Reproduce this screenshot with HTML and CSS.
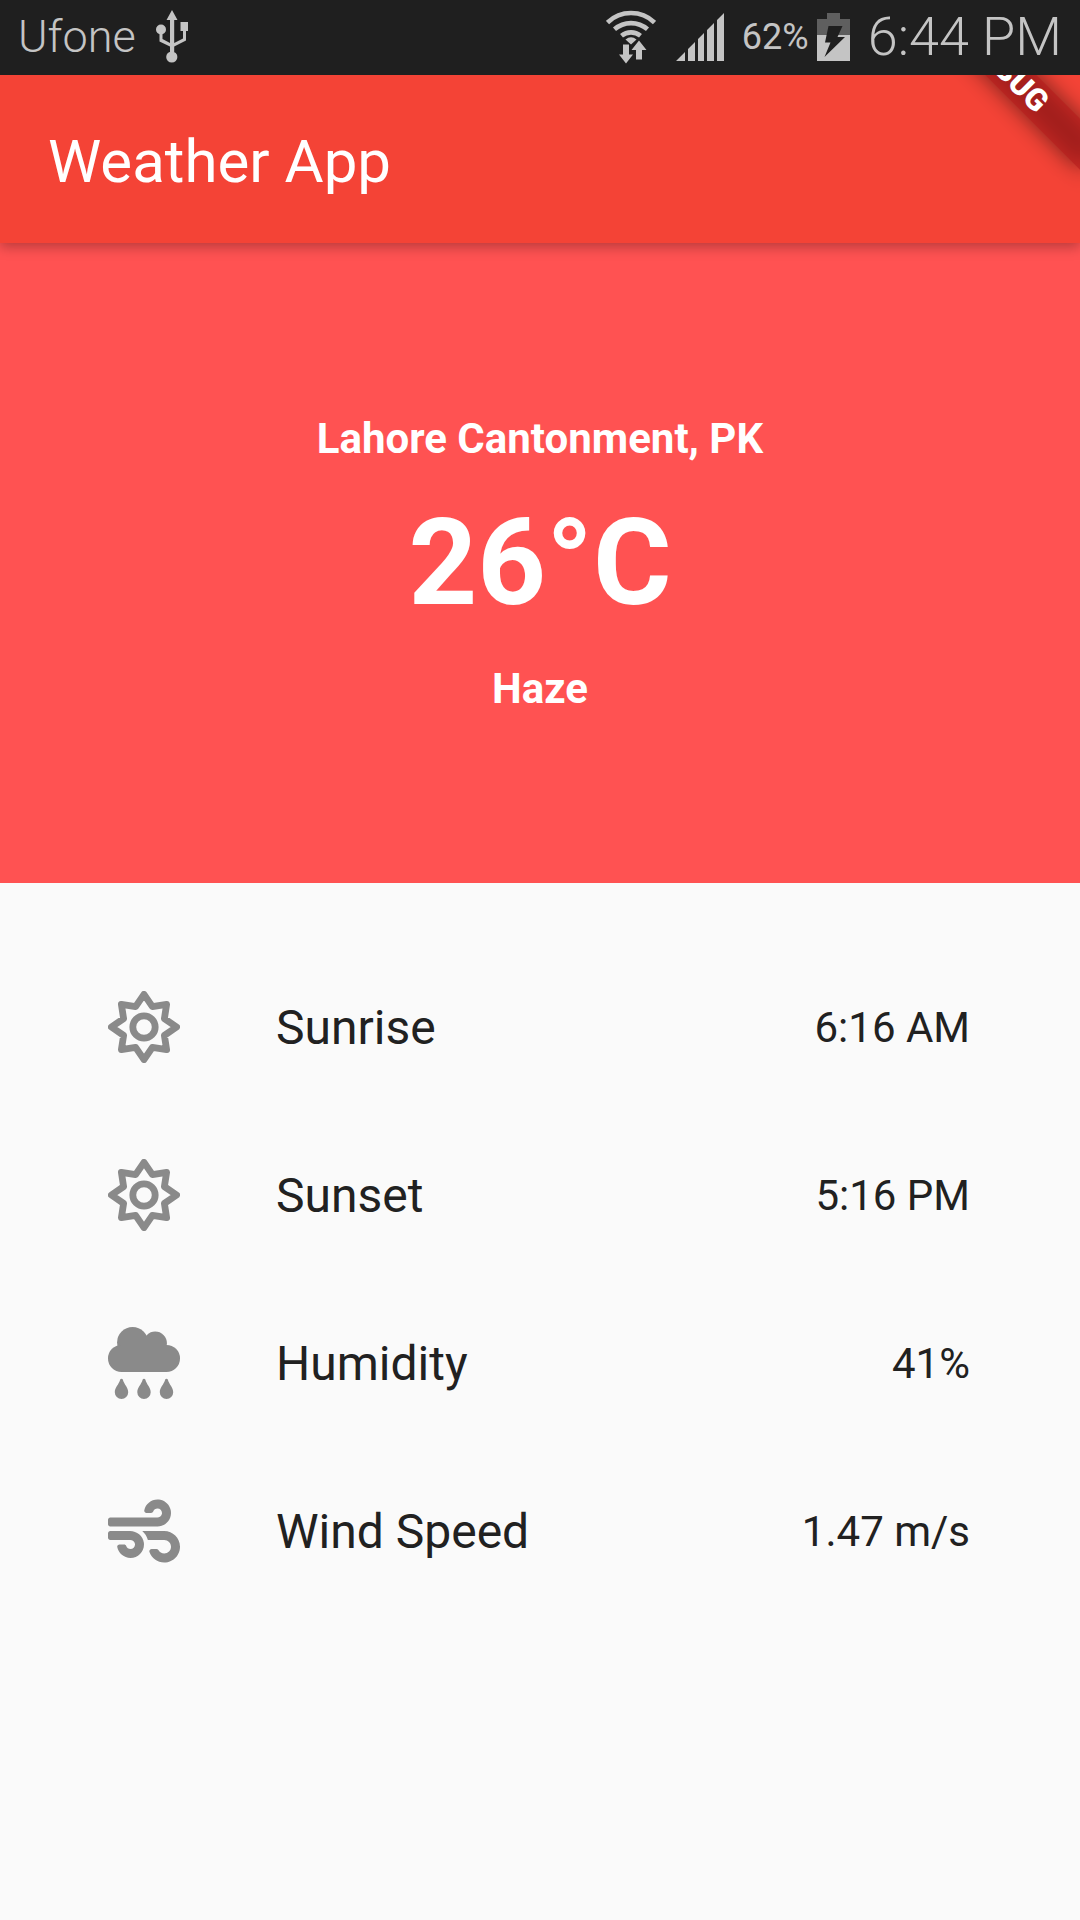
FILE: index.html
```html
<!DOCTYPE html>
<html lang="en">
<head>
  <meta charset="utf-8">
  <meta name="viewport" content="width=device-width, initial-scale=1">
  <title>Weather App</title>
  <link rel="stylesheet" href="styles.css">
</head>
<body>
  <svg class="sprite" aria-hidden="true">
    <symbol id="icon-sun" viewBox="0 0 72 72">
      <g fill="none" stroke="currentColor" stroke-width="6.8" stroke-linejoin="round">
        <path d="M36 3.400L44.400 15.600L58.600 13.400L56.400 27.600L68.600 36L56.400 44.400L58.600 58.600L44.400 56.400L36 68.600L27.600 56.400L13.400 58.600L15.600 44.400L3.400 36L15.600 27.600L13.400 13.400L27.600 15.600Z"/>
        <circle cx="36" cy="36" r="11.2"/>
      </g>
    </symbol>
    <symbol id="icon-rain" viewBox="0 0 72 72">
      <g fill="currentColor">
        <circle cx="24.6" cy="15.5" r="15.5"/>
        <circle cx="47.2" cy="16.2" r="11.7"/>
        <rect x="0" y="17.9" width="72" height="27" rx="13.5"/>
        <rect x="14" y="14" width="44" height="20"/>
        <path id="drop" d="M12.2 52.5C12.5 51.5 14.5 51.5 14.8 52.5C16.3 57.8 20.2 60.6 20.2 65.3A6.7 6.7 0 0 1 6.8 65.3C6.8 60.6 10.7 57.8 12.2 52.5Z"/>
        <use href="#drop" x="22.5"/>
        <use href="#drop" x="45"/>
      </g>
    </symbol>
    <symbol id="icon-wind" viewBox="0 0 512 512">
      <path fill="currentColor" d="M156.7 256H16c-8.8 0-16 7.2-16 16v32c0 8.8 7.2 16 16 16h142.2c15.9 0 30.8 10.9 33.4 26.6 3.3 20-12.1 37.4-31.6 37.4-14.1 0-26.1-9.2-30.4-21.9-2.1-6.3-8.6-10.1-15.2-10.1H81.6c-9.8 0-17.7 8.8-15.9 18.4 8.6 44.1 47.6 77.6 94.2 77.6 57.1 0 102.7-50.1 95.2-108.6C249 291 205.4 256 156.7 256zM16 224h336c59.7 0 106.8-54.8 93.8-116.7-7.6-36.2-36.9-65.5-73.1-73.1-55.4-11.6-105.1 24.9-114.9 75.5-1.9 9.6 6.1 18.3 15.8 18.3h32.8c6.7 0 13.1-3.8 15.2-10.1C325.9 105.2 337.9 96 352 96c19.4 0 34.9 17.4 31.6 37.4-2.6 15.7-17.4 26.6-33.4 26.6H16c-8.8 0-16 7.2-16 16v32c0 8.8 7.2 16 16 16zm384 32H243.7c19.3 16.6 33.2 38.8 39.8 64H400c26.5 0 48 21.5 48 48s-21.5 48-48 48c-17.9 0-33.3-9.9-41.6-24.4-2.9-5-8.7-7.6-14.5-7.6h-33.8c-10.9 0-19 10.8-15.3 21.1 17.8 50.6 70.5 84.8 129.4 72.3 41.2-8.7 75.1-41.6 84.7-82.7C526 321.5 470.5 256 400 256z"/>
    </symbol>
  </svg>

  <div class="app">
    <div class="status">
      <div class="status-group">
        <span class="carrier">Ufone</span>
        <svg class="usb" viewBox="0 0 32 53" role="img" aria-label="USB connected">
          <path d="M16 0L21.5 10H18.2V33L27 28.500V21H24.500V12H32V21H30V30.500L18.200 36.500V42H14V36.500L3.500 31.500V24H6.500V29L14 33V10H10.500Z" fill="currentColor"/>
          <circle cx="5" cy="19.5" r="5" fill="currentColor"/>
          <circle cx="15.8" cy="47" r="5.6" fill="currentColor"/>
        </svg>
      </div>
      <div class="status-group">
        <svg class="wifi" viewBox="0 0 50 54" role="img" aria-label="Wi-Fi">
          <g fill="none" stroke="currentColor" stroke-width="4.6">
            <path d="M1.5 12.500A34 34 0 0 1 48.500 12.500"/>
            <path d="M8.5 19.300A25 25 0 0 1 41.500 19.300"/>
            <path d="M15.5 25.800A15 15 0 0 1 34.500 25.800"/>
          </g>
          <path fill="currentColor" d="M19.5 29.500Q25 25 30.500 29.500L25 34.500ZM17 34.500H23V44.500H27L20 53.500L13 44.500H17ZM33 30.500L40.500 40H36V49.500H30V40H25.500Z"/>
        </svg>
        <svg class="signal" viewBox="0 0 48 48" role="img" aria-label="Mobile signal">
          <path fill="currentColor" d="M0 48L9 39V48ZM12 36L19 29V48H12ZM22 26L28 20V48H22ZM31 17L38 10V48H31ZM41 7L48 0V48H41Z"/>
        </svg>
        <span class="charge">62%</span>
        <svg class="battery" viewBox="0 0 33 48" role="img" aria-label="Battery charging">
          <path fill="#5f5f5f" d="M10 0H23V6H33V22H0V6H10Z"/>
          <path fill="currentColor" d="M0 22H33V48H0Z"/>
          <path fill="#1f1f1f" d="M11.5 13H25.500L20.500 24H28L7.500 44L13.500 29.500H8Z"/>
        </svg>
        <time class="clock">6:44 PM</time>
      </div>
    </div>

    <header class="app-bar">
      <h1 class="app-title">Weather App</h1>
    </header>
    <div class="debug-banner"><span class="debug-label">DEBUG</span></div>

    <main>
      <section class="current">
        <h2 class="place">Lahore Cantonment, PK</h2>
        <p class="temperature">26°C</p>
        <p class="place">Haze</p>
      </section>

      <ul class="details">
        <li class="detail">
          <svg class="detail-icon" aria-hidden="true"><use href="#icon-sun"/></svg>
          <span class="detail-name">Sunrise</span>
          <span class="detail-value">6:16 AM</span>
        </li>
        <li class="detail">
          <svg class="detail-icon" aria-hidden="true"><use href="#icon-sun"/></svg>
          <span class="detail-name">Sunset</span>
          <span class="detail-value">5:16 PM</span>
        </li>
        <li class="detail">
          <svg class="detail-icon" aria-hidden="true"><use href="#icon-rain"/></svg>
          <span class="detail-name">Humidity</span>
          <span class="detail-value">41%</span>
        </li>
        <li class="detail">
          <svg class="detail-icon" aria-hidden="true"><use href="#icon-wind"/></svg>
          <span class="detail-name">Wind Speed</span>
          <span class="detail-value">1.47 m/s</span>
        </li>
      </ul>
    </main>
  </div>
</body>
</html>
```
FILE: styles.css
```css
* {
  box-sizing: border-box;
}

body,
h1,
h2,
p,
ul {
  margin: 0;
  padding: 0;
}

body {
  background: #fafafa;
  color: #212121;
  font-family: Roboto, "Liberation Sans", sans-serif;
}

.sprite {
  position: absolute;
  width: 0;
  height: 0;
}

.app {
  position: relative;
  min-height: 100vh;
  overflow: hidden;
}

/* System status bar */
.status {
  position: relative;
  z-index: 3;
  display: flex;
  align-items: center;
  justify-content: space-between;
  height: 75px;
  padding: 0 18px 2px;
  background: #1f1f1f;
  color: #c4c4c4;
  font-weight: 300;
}

.status-group {
  display: flex;
  align-items: center;
}

.carrier {
  margin-right: 20px;
  font-size: 45px;
}

.usb {
  width: 32px;
  height: 53px;
}

.wifi {
  width: 50px;
  height: 54px;
  margin-right: 20px;
}

.signal {
  width: 48px;
  height: 48px;
  margin-right: 18px;
}

.charge {
  margin-right: 8px;
  font-size: 36px;
  font-weight: 400;
}

.battery {
  width: 33px;
  height: 48px;
  margin-right: 18px;
}

.clock {
  font-size: 54px;
  line-height: 72px;
}

/* App bar */
.app-bar {
  position: relative;
  z-index: 1;
  display: flex;
  align-items: center;
  height: 168px;
  padding: 6px 48px 0;
  background: #f44336;
  box-shadow: 0 4px 12px rgba(0, 0, 0, 0.28);
}

.app-title {
  color: #fff;
  font-size: 60px;
  font-weight: 400;
  line-height: 72px;
}

/* Corner ribbon, turned around the top right corner of the screen */
.debug-banner {
  position: absolute;
  z-index: 2;
  top: 84px;
  right: -120px;
  width: 240px;
  height: 36px;
  transform: rotate(45deg);
  transform-origin: 120px -84px;
}

.debug-banner::before {
  content: "";
  position: absolute;
  inset: 0;
  background: rgba(0, 0, 0, 0.5);
  filter: blur(11px);
}

.debug-label {
  position: relative;
  display: block;
  background: rgba(183, 28, 28, 0.63);
  color: #fff;
  font-size: 31px;
  font-weight: 900;
  line-height: 36px;
  text-align: center;
}

/* Current conditions */
.current {
  display: flex;
  flex-direction: column;
  align-items: center;
  justify-content: center;
  gap: 30px;
  height: 640px;
  background: #ff5252;
  color: #fff;
  font-weight: 700;
}

.place {
  font-size: 42px;
  line-height: 49px;
}

.temperature {
  font-size: 120px;
  line-height: 141px;
}

/* Detail list */
.details {
  padding: 60px 110px 60px 108px;
  list-style: none;
}

.detail {
  display: flex;
  align-items: center;
  height: 168px;
}

.detail-icon {
  width: 72px;
  height: 72px;
  margin-right: 96px;
  color: #8a8a8a;
}

.detail-name {
  flex: 1;
  font-size: 48px;
}

.detail-value {
  font-size: 42px;
}
```
